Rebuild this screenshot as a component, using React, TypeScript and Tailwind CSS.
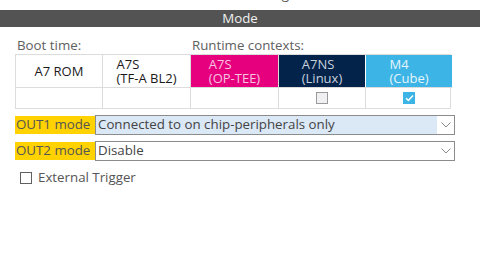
import React from "react";

const font = { fontFamily: '"Open Sans", "DejaVu Sans", sans-serif' };

function Check({ checked }: { checked: boolean }) {
  if (checked) {
    return (
      <span className="inline-flex h-[12px] w-[12px] items-center justify-center bg-[#3cb4e6]">
        <svg width="9" height="8" viewBox="0 0 9 8">
          <path d="M1 4.2 L3.4 6.4 L8 1.4" fill="none" stroke="white" strokeWidth="1.5" />
        </svg>
      </span>
    );
  }
  return <span className="inline-block h-[12px] w-[12px] border border-[#9a9a9a] bg-[#f0f0f2]" />;
}

function Chevron() {
  return (
    <svg width="10" height="6" viewBox="0 0 10 6">
      <path d="M0.5 0.5 L5 5 L9.5 0.5" fill="none" stroke="#8a8a8a" strokeWidth="1" />
    </svg>
  );
}

export default function App() {
  const headCells = [
    { l1: "A7 ROM", l2: "", bg: "bg-white", fg: "text-[#1a1a1a]" },
    { l1: "A7S", l2: "(TF-A BL2)", bg: "bg-white", fg: "text-[#1a1a1a]" },
    { l1: "A7S", l2: "(OP-TEE)", bg: "bg-[#e6007e]", fg: "text-[#f6c4e0]" },
    { l1: "A7NS", l2: "(Linux)", bg: "bg-[#03234b]", fg: "text-[#c8d0dc]" },
    { l1: "M4", l2: "(Cube)", bg: "bg-[#3cb4e6]", fg: "text-[#e6f5fb]" },
  ];
  return (
    <div className="h-[270px] w-[480px] overflow-hidden bg-white text-[13.3px]" style={font}>
      <div className="mt-[-13px] h-[23px] text-center text-[13.3px] leading-[15px] text-[#505050]">
        DAC1 Mode and Configuration
      </div>
      <div className="flex h-[17px] items-center justify-center bg-[#525352] text-[13.3px] text-[#f0f0f0]">
        Mode
      </div>
      <div className="ml-[15px] mt-[10px] flex text-[13.3px] leading-[16px] text-[#606060]">
        <div className="w-[177px] pl-[2px]">Boot time:</div>
        <div>Runtime contexts:</div>
      </div>
      <div className="ml-[15px] mt-[1px] grid w-[436px] grid-cols-[86px_88px_88px_87px_87px] border border-[#dcdcdc]">
        {headCells.map((c, i) => (
          <div
            key={i}
            className={`flex h-[32px] items-center justify-center ${c.bg} ${c.fg} ${i > 0 ? "border-l border-[#dcdcdc]" : ""} ${i === 4 ? "border-l-white" : ""}`}
          >
            <div className="text-left text-[13px] leading-[14px]">
              <div>{c.l1}</div>
              {c.l2 && <div>{c.l2}</div>}
            </div>
          </div>
        ))}
        {[0, 1, 2, 3, 4].map((i) => (
          <div
            key={"r" + i}
            className={`flex h-[21px] items-center justify-center border-t border-[#dcdcdc] ${i > 0 ? "border-l" : ""}`}
          >
            {i === 3 && <Check checked={false} />}
            {i === 4 && <Check checked={true} />}
          </div>
        ))}
      </div>
      <div className="ml-[15px] mt-[6px] flex flex-col gap-[6px]">
        <div className="flex items-center">
          <div className="flex h-[18px] w-[80px] items-center bg-[#ffd200] pl-[1px] text-[13.3px] text-[#555]">
            OUT1 mode
          </div>
          <div className="flex h-[20px] w-[360px] items-center border border-[#8c8c8c] bg-[#dbe8f5]">
            <span className="flex-1 pl-[2px] text-[13.3px] text-[#444]">Connected to on chip-peripherals only</span>
            <span className="flex h-full w-[17px] items-center justify-center bg-white">
              <Chevron />
            </span>
          </div>
        </div>
        <div className="flex items-center">
          <div className="flex h-[18px] w-[80px] items-center bg-[#ffd200] pl-[1px] text-[13.3px] text-[#555]">
            OUT2 mode
          </div>
          <div className="flex h-[20px] w-[360px] items-center border border-[#8c8c8c] bg-white">
            <span className="flex-1 pl-[2px] text-[13.3px] text-[#444]">Disable</span>
            <span className="flex h-full w-[17px] items-center justify-center bg-white">
              <Chevron />
            </span>
          </div>
        </div>
      </div>
      <div className="ml-[20px] mt-[7px] flex items-center gap-[6px] text-[13.3px] text-[#555]">
        <span className="inline-block h-[12px] w-[12px] border border-[#606060] bg-white" />
        <span>External Trigger</span>
      </div>
    </div>
  );
}
